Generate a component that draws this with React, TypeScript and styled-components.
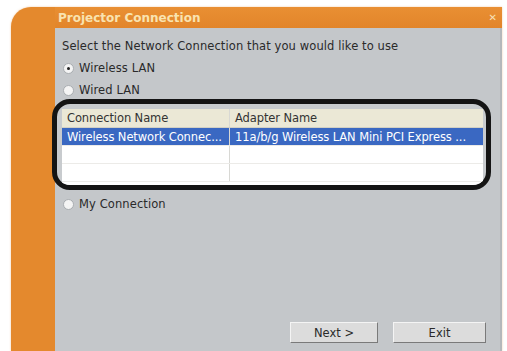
import React from "react";
import styled, { createGlobalStyle } from "styled-components";

const Global = createGlobalStyle`
  html, body { margin: 0; padding: 0; background: #ffffff; }
  body { font-family: Tahoma, "DejaVu Sans", "Liberation Sans", sans-serif; overflow: hidden; }
`;

const Frame = styled.div`
  margin: 7px 0 0 11px;
  width: 491px;
  height: 344px;
  background: #e4892d;
  border-top-left-radius: 20px;
  display: flex;
  flex-direction: column;
  padding-left: 44px;
  box-sizing: border-box;
  box-shadow: 0 0 2px rgba(228, 137, 45, 0.5);
`;

const TitleBar = styled.div`
  height: 21px;
  display: flex;
  align-items: center;
  justify-content: space-between;
  padding: 0 5px 0 3px;
  background: linear-gradient(#e98f33, #e2852a);
`;

const Title = styled.span`
  font-family: "DejaVu Sans", sans-serif;
  font-weight: bold;
  font-size: 12px;
  color: #f9e3b0;
  letter-spacing: 0;
`;

const Close = styled.span`
  font-family: "DejaVu Sans", sans-serif;
  font-weight: bold;
  font-size: 10px;
  color: #f7e0b6;
  line-height: 1;
`;

const Body = styled.div`
  flex: 1;
  background: #c4c7ca;
  display: flex;
  flex-direction: column;
  border-right: 2px solid #b5b8bb;
  font-family: "DejaVu Sans", sans-serif;
  font-size: 11.5px;
  color: #2a2a2a;
  letter-spacing: 0.1px;
`;

const Prompt = styled.div`
  margin: 12px 0 0 7px;
  line-height: 13px;
`;

const RadioRow = styled.label<{ $top: number; $left?: number }>`
  display: flex;
  align-items: center;
  gap: 5px;
  margin: ${(p) => p.$top}px 0 0 ${(p) => p.$left ?? 8}px;
  line-height: 13px;
  height: 13px;
`;

const RadioDot = styled.span<{ $checked?: boolean }>`
  width: 9px;
  height: 9px;
  border-radius: 50%;
  background: #f4f4f4;
  border: 1px solid #a9adb1;
  display: inline-flex;
  align-items: center;
  justify-content: center;
  &::after {
    content: "";
    width: 3px;
    height: 3px;
    border-radius: 50%;
    background: ${(p) => (p.$checked ? "#222" : "transparent")};
  }
`;

const Highlight = styled.div`
  margin: 2px 0 0 -3px;
  width: 439px;
  height: 91px;
  box-sizing: border-box;
  border: 5px solid #141414;
  border-radius: 18px;
  padding: 5px 3px 0 5px;
  background: #c8cbce;
  overflow: hidden;
`;

const List = styled.div`
  background: #ffffff;
  height: 100%;
  display: flex;
  flex-direction: column;
`;

const Row = styled.div<{ $kind: "head" | "sel" | "plain" }>`
  display: grid;
  grid-template-columns: 168px 1fr;
  height: ${(p) => (p.$kind === "head" ? 18 : 17)}px;
  align-items: center;
  background: ${(p) =>
    p.$kind === "head" ? "#ebe8d6" : p.$kind === "sel" ? "#3a68c2" : "#ffffff"};
  color: ${(p) => (p.$kind === "sel" ? "#ffffff" : "#333333")};
  border-bottom: 1px solid ${(p) => (p.$kind === "head" ? "#d2d0c4" : "#ecebe8")};
`;

const Cell = styled.div<{ $last?: boolean }>`
  padding-left: 5px;
  white-space: nowrap;
  overflow: hidden;
  height: 100%;
  display: flex;
  align-items: center;
  letter-spacing: -0.1px;
  border-right: ${(p) => (p.$last ? "none" : "1px solid #d8d8d4")};
`;

const ButtonRow = styled.div`
  margin-top: auto;
  margin-bottom: 8px;
  display: flex;
  justify-content: flex-end;
  gap: 15px;
  padding-right: 14px;
`;

const Button = styled.button<{ $w: number }>`
  width: ${(p) => p.$w}px;
  height: 21px;
  background: #dcdcdc;
  border: 1px solid;
  border-color: #f4f4f4 #7a7a7a #7a7a7a #f4f4f4;
  font-family: "DejaVu Sans", sans-serif;
  font-size: 11.5px;
  color: #2a2a2a;
  padding: 0;
`;

export default function App() {
  return (
    <>
      <Global />
      <Frame>
        <TitleBar>
          <Title>Projector Connection</Title>
          <Close>✕</Close>
        </TitleBar>
        <Body>
          <Prompt>Select the Network Connection that you would like to use</Prompt>
          <RadioRow $top={9}>
            <RadioDot $checked />
            Wireless LAN
          </RadioRow>
          <RadioRow $top={9}>
            <RadioDot />
            Wired LAN
          </RadioRow>
          <Highlight>
            <List>
              <Row $kind="head">
                <Cell>Connection Name</Cell>
                <Cell $last>Adapter Name</Cell>
              </Row>
              <Row $kind="sel">
                <Cell>Wireless Network Connec...</Cell>
                <Cell $last>11a/b/g Wireless LAN Mini PCI Express ...</Cell>
              </Row>
              <Row $kind="plain">
                <Cell />
                <Cell $last />
              </Row>
              <Row $kind="plain">
                <Cell />
                <Cell $last />
              </Row>
            </List>
          </Highlight>
          <RadioRow $top={8}>
            <RadioDot />
            My Connection
          </RadioRow>
          <ButtonRow>
            <Button $w={88}>Next &gt;</Button>
            <Button $w={93}>Exit</Button>
          </ButtonRow>
        </Body>
      </Frame>
    </>
  );
}
